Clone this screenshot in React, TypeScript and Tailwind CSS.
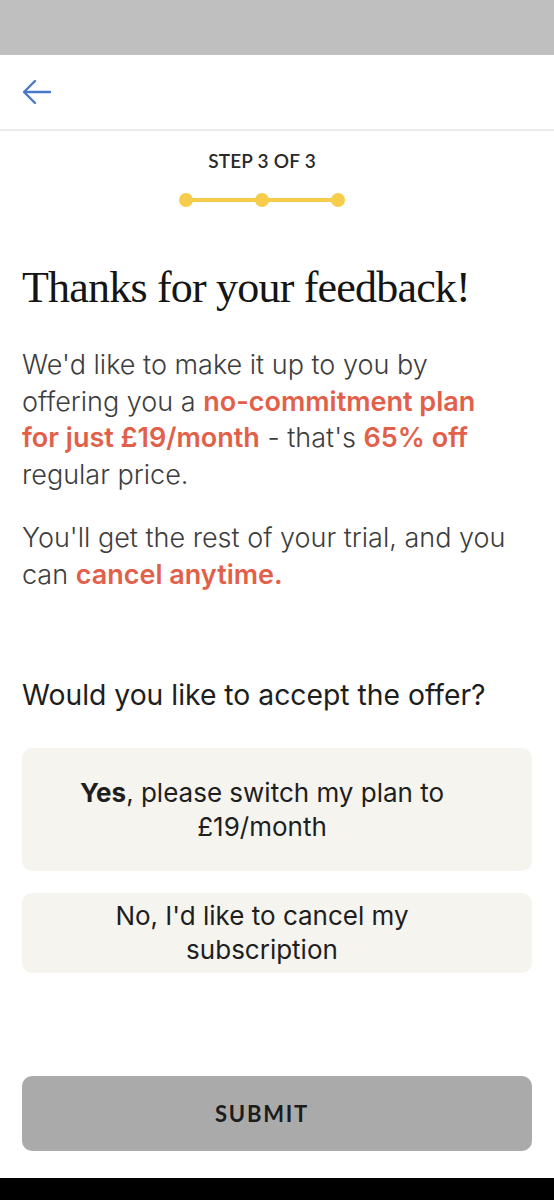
import React from "react";

export default function App() {
  const sans = { fontFamily: "Inter, 'Open Sans', sans-serif" } as React.CSSProperties;
  return (
    <div className="w-[554px] h-[1200px] bg-white flex flex-col overflow-hidden" style={sans}>
      <div className="h-[55px] bg-[#bfbfbf] shrink-0" />
      <div className="h-[76px] shrink-0 flex items-center px-[22px] border-b-2 border-[#ececec]">
        <svg width="30" height="26" viewBox="0 0 30 26" fill="none" stroke="#4a78c8" strokeWidth="2.4" strokeLinecap="round" strokeLinejoin="round">
          <path d="M28 13H3" />
          <path d="M13 2L2 13l11 11" />
        </svg>
      </div>
      <div className="flex flex-col items-center pt-[18px] pr-[30px]">
        <div className="text-[19px] font-semibold text-[#2a2a2a] tracking-[0.2px] leading-[24px]" style={{ fontFamily: "Lato, sans-serif" }}>
          STEP 3 OF 3
        </div>
        <div className="mt-[20px] relative w-[166px] h-[14px] flex items-center justify-between">
          <div className="absolute left-[7px] right-[7px] top-[5px] h-[4px] bg-[#f6cd4a]" />
          <div className="relative w-[14px] h-[14px] rounded-full bg-[#f6cd4a]" />
          <div className="relative w-[14px] h-[14px] rounded-full bg-[#f6cd4a]" />
          <div className="relative w-[14px] h-[14px] rounded-full bg-[#f6cd4a]" />
        </div>
      </div>
      <div className="px-[22px]">
        <h1 className="mt-[55px] text-[44px] leading-[52px] text-[#151515] tracking-[-0.8px]" style={{ fontFamily: "'Liberation Serif', serif" }}>
          Thanks for your feedback!
        </h1>
        <p className="mt-[33px] text-[27px] leading-[36.7px] font-light text-[#3d3d3d] whitespace-nowrap">
          We'd like to make it up to you by
          <br />
          offering you a <span className="font-semibold text-[#e2604a]">no-commitment plan</span>
          <br />
          <span className="font-semibold text-[#e2604a]">for just £19/month</span> - that's{" "}
          <span className="font-semibold text-[#e2604a]">65% off</span>
          <br />
          regular price.
        </p>
        <p className="mt-[26px] text-[27px] leading-[36.7px] font-light text-[#3d3d3d] whitespace-nowrap">
          You'll get the rest of your trial, and you
          <br />
          can <span className="font-semibold text-[#e2604a]">cancel anytime.</span>
        </p>
        <p className="mt-[84px] text-[28.3px] leading-[36px] text-[#1e1e1e] whitespace-nowrap">Would you like to accept the offer?</p>
        <button className="mt-[35px] w-full h-[123px] rounded-[10px] bg-[#f5f4ef] text-[26px] leading-[34px] text-[#1e1e1e] pl-[30px] pr-[60px] text-center">
          <b className="font-bold">Yes</b>, please switch my plan to
          <br />
          £19/month
        </button>
        <button className="mt-[22px] w-full h-[80px] rounded-[10px] bg-[#f5f4ef] text-[26px] leading-[34px] text-[#1e1e1e] pl-[30px] pr-[60px] text-center">
          No, I'd like to cancel my
          <br />
          subscription
        </button>
        <button className="mt-[103px] w-full h-[75px] rounded-[10px] bg-[#aaaaaa] text-[22px] font-bold tracking-[1.8px] text-[#1c1c1c] pr-[30px]" style={{ fontFamily: "Lato, sans-serif" }}>
          SUBMIT
        </button>
      </div>
      <div className="flex-1" />
      <div className="h-[22px] bg-black shrink-0" />
    </div>
  );
}
